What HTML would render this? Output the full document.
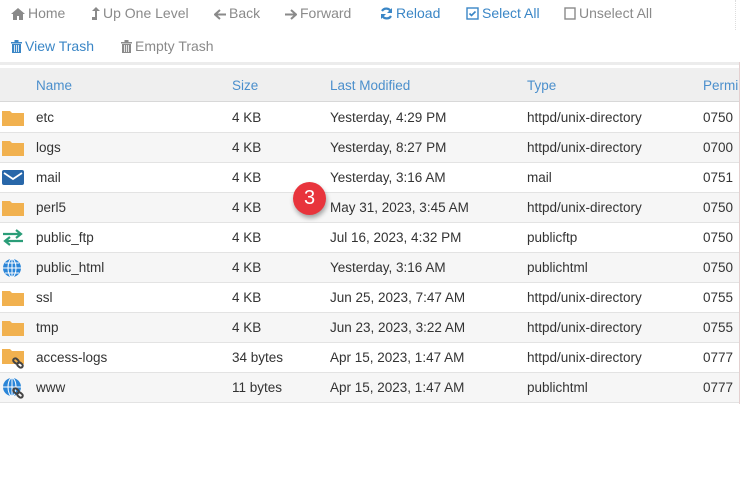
<!DOCTYPE html>
<html><head><meta charset="utf-8"><style>
*{margin:0;padding:0;box-sizing:border-box}
body{width:742px;height:478px;background:#fff;font-family:"Liberation Sans",sans-serif;position:relative;overflow:hidden}
.tb{position:absolute;font-size:14px;color:#8a8a8a;white-space:nowrap}
.tb.b{color:#3a86c6}
.tb svg{vertical-align:-2px;margin-right:3px}
.sep{position:absolute;left:0;top:62px;width:740px;height:3px;background:#ececec}
.hdr{position:absolute;left:0;top:68px;width:740px;height:34px;background:#efefef;border-bottom:1px solid #d8d8d8}
.hdr span{position:absolute;top:10px;font-size:13.5px;color:#4b8fcc}
.row{position:absolute;left:0;width:740px;height:30px;border-bottom:1px solid #e3e3e3;font-size:13.5px;color:#333}
.row.g{background:#f6f6f6}
.row span{position:absolute;top:7px;white-space:nowrap}
.ic{position:absolute;left:2px;top:6px}
.vl{position:absolute;left:739px;top:62px;width:1px;height:342px;background:#e4d0d0}
</style></head><body>
<div class="tb" style="left:11px;top:5px"><svg width="14" height="12" viewBox="0 0 14 12"><path d="M7 0L0 6h2v6h4V8h2v4h4V6h2z" fill="#8a8a8a"/></svg>Home</div>
<div class="tb" style="left:92px;top:5px"><svg width="8" height="13" viewBox="0 0 8 13"><path d="M4 0L0 4h3v6H0v3h5V4h3z" fill="#8a8a8a"/></svg>Up One Level</div>
<div class="tb" style="left:214px;top:5px"><svg width="12" height="11" viewBox="0 0 12 11"><path d="M6 1L1 5.5 6 10M1 5.5h11" stroke="#8a8a8a" stroke-width="2" fill="none"/></svg>Back</div>
<div class="tb" style="left:285px;top:5px"><svg width="12" height="11" viewBox="0 0 12 11"><path d="M6 1l5 4.5L6 10M11 5.5H0" stroke="#8a8a8a" stroke-width="2" fill="none"/></svg>Forward</div>
<div class="tb b" style="left:380px;top:5px"><svg width="13" height="13" viewBox="0 0 13 13"><path d="M11 5A5 5 0 0 0 2 4M2 8a5 5 0 0 0 9 1" stroke="#3a86c6" stroke-width="2.2" fill="none"/><path d="M12 1v5H7zM1 12V7h5z" fill="#3a86c6"/></svg>Reload</div>
<div class="tb b" style="left:466px;top:5px"><svg width="13" height="13" viewBox="0 0 13 13"><rect x="1" y="1" width="11" height="11" stroke="#3a86c6" stroke-width="1.4" fill="none"/><path d="M3.5 6.5l2 2 4-4" stroke="#3a86c6" stroke-width="1.6" fill="none"/></svg>Select All</div>
<div class="tb" style="left:564px;top:5px"><svg width="12" height="13" viewBox="0 0 12 13"><rect x="1" y="1" width="10" height="11" stroke="#8a8a8a" stroke-width="1.4" fill="none"/></svg>Unselect All</div>
<div style="position:absolute;left:735px;top:0;height:30px;border-left:1px dotted #ddd"></div>
<div class="tb b" style="left:11px;top:38px"><svg width="11" height="13" viewBox="0 0 11 13"><path d="M0 2h11v1.5H0zM3.5 0h4v2h-4zM1 4h9v9H1z" fill="#3a86c6"/><path d="M3.5 5v7M5.5 5v7M7.5 5v7" stroke="#fff" stroke-width=".8"/></svg>View Trash</div>
<div class="tb" style="left:121px;top:38px"><svg width="11" height="13" viewBox="0 0 11 13"><path d="M0 2h11v1.5H0zM3.5 0h4v2h-4zM1 4h9v9H1z" fill="#8a8a8a"/><path d="M3.5 5v7M5.5 5v7M7.5 5v7" stroke="#fff" stroke-width=".8"/></svg>Empty Trash</div>
<div class="sep"></div>
<div class="hdr"><span style="left:36px">Name</span><span style="left:232px">Size</span><span style="left:330px">Last Modified</span><span style="left:527px">Type</span><span style="left:703px">Permi</span></div>

<div class="row" style="top:103px"><svg class="ic" width="22" height="17" viewBox="0 0 22 17"><path d="M0 2h8l2 2h12v13H0z" fill="#f1b14f"/></svg><span style="left:36px">etc</span><span style="left:232px">4 KB</span><span style="left:330px">Yesterday, 4:29 PM</span><span style="left:527px">httpd/unix-directory</span><span style="left:703px">0750</span></div>
<div class="row g" style="top:133px"><svg class="ic" width="22" height="17" viewBox="0 0 22 17"><path d="M0 2h8l2 2h12v13H0z" fill="#f1b14f"/></svg><span style="left:36px">logs</span><span style="left:232px">4 KB</span><span style="left:330px">Yesterday, 8:27 PM</span><span style="left:527px">httpd/unix-directory</span><span style="left:703px">0700</span></div>
<div class="row" style="top:163px"><svg class="ic" width="22" height="17" viewBox="0 0 22 17"><rect x="0" y="1" width="22" height="15" rx="2" fill="#2867a9"/><path d="M2 4l9 6 9-6" stroke="#fff" stroke-width="1.8" fill="none"/></svg><span style="left:36px">mail</span><span style="left:232px">4 KB</span><span style="left:330px">Yesterday, 3:16 AM</span><span style="left:527px">mail</span><span style="left:703px">0751</span></div>
<div class="row g" style="top:193px"><svg class="ic" width="22" height="17" viewBox="0 0 22 17"><path d="M0 2h8l2 2h12v13H0z" fill="#f1b14f"/></svg><span style="left:36px">perl5</span><span style="left:232px">4 KB</span><span style="left:330px">May 31, 2023, 3:45 AM</span><span style="left:527px">httpd/unix-directory</span><span style="left:703px">0750</span></div>
<div class="row" style="top:223px"><svg class="ic" width="22" height="17" viewBox="0 0 22 17"><path d="M1 5h17M14 1l5 4-5 4M21 12H4M8 8l-5 4 5 4" stroke="#2a9d78" stroke-width="2.2" fill="none"/></svg><span style="left:36px">public_ftp</span><span style="left:232px">4 KB</span><span style="left:330px">Jul 16, 2023, 4:32 PM</span><span style="left:527px">publicftp</span><span style="left:703px">0750</span></div>
<div class="row g" style="top:253px"><svg class="ic" width="22" height="20" viewBox="0 0 22 20" style="top:5px"><circle cx="10" cy="10" r="9" fill="#2b86d8"/><path d="M1 10h18M10 1v18M3 5h14M3 15h14" stroke="#fff" stroke-width="1"/><ellipse cx="10" cy="10" rx="4" ry="9" stroke="#fff" fill="none"/></svg><span style="left:36px">public_html</span><span style="left:232px">4 KB</span><span style="left:330px">Yesterday, 3:16 AM</span><span style="left:527px">publichtml</span><span style="left:703px">0750</span></div>
<div class="row" style="top:283px"><svg class="ic" width="22" height="17" viewBox="0 0 22 17"><path d="M0 2h8l2 2h12v13H0z" fill="#f1b14f"/></svg><span style="left:36px">ssl</span><span style="left:232px">4 KB</span><span style="left:330px">Jun 25, 2023, 7:47 AM</span><span style="left:527px">httpd/unix-directory</span><span style="left:703px">0755</span></div>
<div class="row g" style="top:313px"><svg class="ic" width="22" height="17" viewBox="0 0 22 17"><path d="M0 2h8l2 2h12v13H0z" fill="#f1b14f"/></svg><span style="left:36px">tmp</span><span style="left:232px">4 KB</span><span style="left:330px">Jun 23, 2023, 3:22 AM</span><span style="left:527px">httpd/unix-directory</span><span style="left:703px">0755</span></div>
<div class="row" style="top:343px"><svg class="ic" width="24" height="22" viewBox="0 0 24 22" style="top:5px"><path d="M0 1h8l2 2h12v13H0z" fill="#f1b14f"/><g stroke="#444" stroke-width="2" fill="none"><rect x="11" y="11" width="6" height="4" rx="2" transform="rotate(40 14 13)"/><rect x="15" y="15" width="6" height="4" rx="2" transform="rotate(40 18 17)"/></g></svg><span style="left:36px">access-logs</span><span style="left:232px">34 bytes</span><span style="left:330px">Apr 15, 2023, 1:47 AM</span><span style="left:527px">httpd/unix-directory</span><span style="left:703px">0777</span></div>
<div class="row g" style="top:373px"><svg class="ic" width="24" height="22" viewBox="0 0 24 22" style="top:5px"><circle cx="10" cy="9" r="9" fill="#2b86d8"/><path d="M1 9h18M10 0v18" stroke="#fff" stroke-width="1"/><ellipse cx="10" cy="9" rx="4" ry="9" stroke="#fff" fill="none"/><g stroke="#444" stroke-width="2" fill="none"><rect x="11" y="11" width="6" height="4" rx="2" transform="rotate(40 14 13)"/><rect x="15" y="15" width="6" height="4" rx="2" transform="rotate(40 18 17)"/></g></svg><span style="left:36px">www</span><span style="left:232px">11 bytes</span><span style="left:330px">Apr 15, 2023, 1:47 AM</span><span style="left:527px">publichtml</span><span style="left:703px">0777</span></div>
<div class="vl"></div>
<div style="position:absolute;left:293px;top:182px;width:33px;height:33px;border-radius:50%;background:#e8343c;box-shadow:1px 3px 5px rgba(0,0,0,.35);color:#fff;font-size:20px;text-align:center;line-height:33px">3</div>
</body></html>
